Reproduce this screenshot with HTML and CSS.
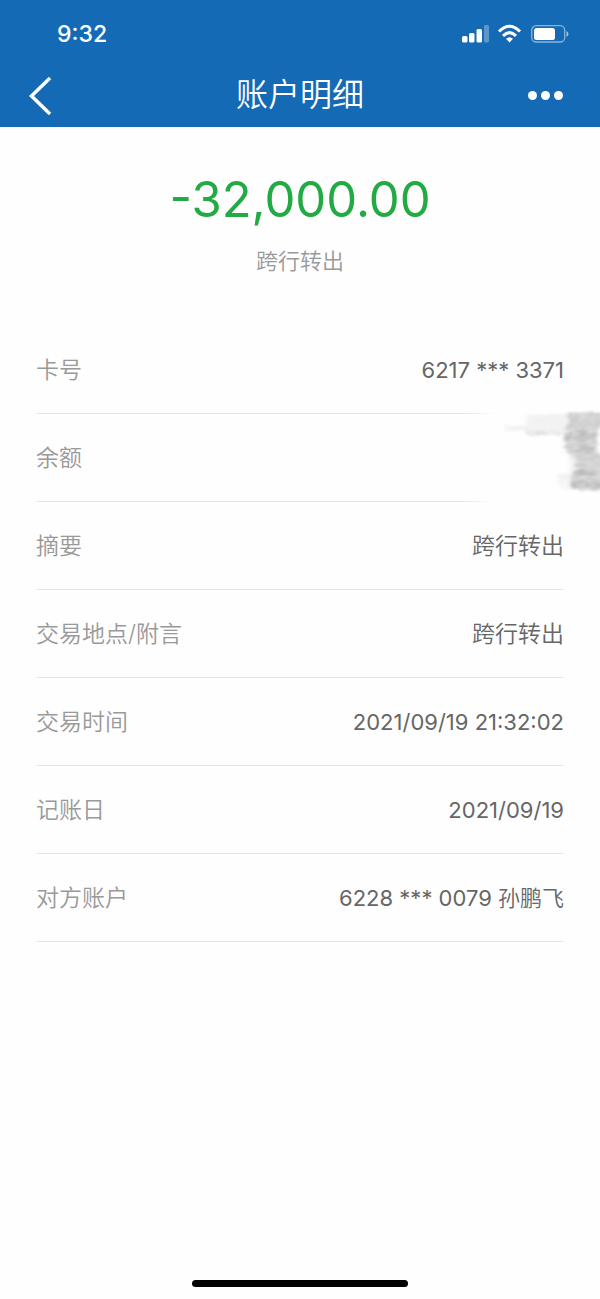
FILE: index.html
```
<!DOCTYPE html>
<html lang="zh-CN">
<head>
    <meta charset="UTF-8">
    <meta name="viewport" content="width=device-width, initial-scale=1.0">
    <title>账户明细</title>
    <link rel="stylesheet" href="styles.css">
</head>
<body>
    <header class="header">
        <div class="status-bar">
            <span class="time">9:32</span>
            <svg class="status-icons" width="108" height="20" viewBox="0 0 108 20" fill="#fff">
                <rect x="1" y="12" width="5.500" height="6.500" rx="1.500"/>
                <rect x="8" y="9" width="5.500" height="9.500" rx="1.500"/>
                <rect x="15.500" y="5" width="5.500" height="13.500" rx="1.500"/>
                <rect x="23" y="1" width="5" height="17.500" rx="1.500" opacity=".3"/>
                <g fill="none" stroke="#fff" stroke-width="3">
                    <path d="M38 7.500Q48.500 -3 59 7.500"/>
                    <path d="M42 11.800Q48.500 5.500 55 11.800"/>
                </g>
                <path d="M45 14.800Q48.500 11.500 52 14.800L48.500 18.500Z"/>
                <rect x="70.700" y="1.700" width="33" height="16.300" rx="4.500" fill="none" stroke="#fff" stroke-width="1.300" opacity=".5"/>
                <rect x="73" y="4" width="21" height="12" rx="2.500"/>
                <path d="M105.500 7Q107.500 8 107.500 10T105.500 13Z" opacity=".6"/>
            </svg>
        </div>
        <div class="nav-bar">
            <button type="button" class="nav-button" aria-label="返回">
                <svg width="24" height="40" viewBox="0 0 24 40" fill="none" stroke="#fff" stroke-width="3.500">
                    <path d="M22 3L3.500 21L22 39"/>
                </svg>
            </button>
            <h1>账户明细</h1>
            <button type="button" class="nav-button more" aria-label="更多">
                <svg width="36" height="10" viewBox="0 0 36 10" fill="#fff">
                    <circle cx="4.500" cy="5.500" r="4.500"/>
                    <circle cx="17.500" cy="5.500" r="4.500"/>
                    <circle cx="30.500" cy="5.500" r="4.500"/>
                </svg>
            </button>
        </div>
    </header>

    <main class="content">
        <div class="amount">-32,000.00</div>
        <div class="amount-type">跨行转出</div>

        <dl class="details">
            <div class="row">
                <dt>卡号</dt>
                <dd>6217 *** 3371</dd>
            </div>
            <div class="row">
                <dt>余额</dt>
                <dd>
                    <!-- balance is brushed out -->
                    <svg class="smudge" width="180" height="130" viewBox="0 0 180 130">
                        <defs>
                            <filter id="soft" x="-20%" y="-50%" width="140%" height="200%">
                                <feGaussianBlur stdDeviation="10 1"/>
                            </filter>
                            <filter id="edge" x="-20%" y="-20%" width="140%" height="140%">
                                <feGaussianBlur stdDeviation="3 1"/>
                            </filter>
                            <filter id="brush" x="-10%" y="-10%" width="120%" height="120%">
                                <feTurbulence type="fractalNoise" baseFrequency="0.120 0.350" numOctaves="3" seed="4" result="noise"/>
                                <feDisplacementMap in="SourceGraphic" in2="noise" scale="8" xChannelSelector="R" yChannelSelector="G" result="rough"/>
                                <feColorMatrix in="noise" type="matrix" values="0 0 0 0 0  0 0 0 0 0  0 0 0 0 0  1.500 0 0 0 0" result="grain"/>
                                <feComposite in="rough" in2="grain" operator="in"/>
                                <feGaussianBlur stdDeviation="1.500 0.800"/>
                            </filter>
                        </defs>
                        <rect x="58" y="107" width="140" height="10" fill="#fefefe" filter="url(#soft)"/>
                        <rect x="60" y="20" width="130" height="7" fill="#fefefe" filter="url(#soft)"/>
                        <g filter="url(#edge)">
                            <path d="M106 24H148V44H108V40H88V36H106Z" fill="#f8f8f8"/>
                            <path d="M147 22H176L186 27V34L176 40V58L186 70V98L176 101L152 99V68L146 60Z" fill="#e8e8e8"/>
                        </g>
                        <g filter="url(#brush)">
                            <path d="M108 25H148V45H106V40H84V36H107Z" fill="#f0f0f0"/>
                            <path d="M107 42H146V45H107Z" fill="#dedede"/>
                            <path d="M138 83H154V99H140Z" fill="#f0f0f0"/>
                            <path d="M148 23H174L186 26V35L178 38V58L174 63L186 68V99L176 101L164 99H151V82L156 80V70L154 67L146 60L145 43L148 37Z" fill="#ccc"/>
                            <path d="M148 42H176V50H148ZM158 56H174V64H158ZM154 80H176V86H154ZM153 91H184V99H153Z" fill="#bababa"/>
                        </g>
                    </svg>
                </dd>
            </div>
            <div class="row">
                <dt>摘要</dt>
                <dd class="text">跨行转出</dd>
            </div>
            <div class="row">
                <dt>交易地点/附言</dt>
                <dd class="text">跨行转出</dd>
            </div>
            <div class="row">
                <dt>交易时间</dt>
                <dd>2021/09/19 21:32:02</dd>
            </div>
            <div class="row">
                <dt>记账日</dt>
                <dd>2021/09/19</dd>
            </div>
            <div class="row">
                <dt>对方账户</dt>
                <dd>6228 *** 0079 <span class="name">孙鹏飞</span></dd>
            </div>
        </dl>
    </main>

    <footer class="home-indicator">
        <div class="home-bar"></div>
    </footer>
</body>
</html>
```
FILE: styles.css
```
* {
    box-sizing: border-box;
}

body {
    margin: 0;
    min-height: 100vh;
    display: flex;
    flex-direction: column;
    background-color: #fefefe;
    font-family: Inter, "Noto Sans CJK SC", sans-serif;
    color: #666;
    overflow-x: hidden;
}

.header {
    background-color: #156ab5;
    color: white;
}

.status-bar {
    display: flex;
    justify-content: space-between;
    align-items: center;
    height: 63px;
    padding: 4px 31px 0 57px;
}

.time {
    font-size: 23px;
    font-weight: 500;
    line-height: 28px;
}

.nav-bar {
    display: flex;
    justify-content: space-between;
    align-items: center;
    height: 64px;
    padding: 0 36px 0 28px;
}

.nav-bar h1 {
    margin: 0;
    font-size: 32px;
    font-weight: 350;
    line-height: 60px;
}

.nav-button {
    display: flex;
    align-items: center;
    width: 44px;
    height: 64px;
    padding: 0;
    border: none;
    background: none;
    cursor: pointer;
}

/* left button is wider so the title sits in the middle */
.nav-button:first-child {
    width: 52px;
}

.nav-button.more {
    justify-content: flex-end;
}

.content {
    flex: 1;
    padding: 40px 36px 0;
}

.amount {
    color: #22aa44;
    font-size: 49px;
    line-height: 66px;
    text-align: center;
}

.amount-type {
    margin-top: 12px;
    color: #999;
    font-size: 22px;
    font-weight: 350;
    line-height: 32px;
    text-align: center;
}

.details {
    margin: 49px 0 0;
}

.row {
    position: relative;
    display: flex;
    justify-content: space-between;
    align-items: center;
    height: 88px;
    border-bottom: 1px solid #e6e6e6;
    font-size: 22px;
    line-height: 32px;
}

.row dt {
    color: #999;
    font-size: 23px;
    font-weight: 350;
}

.row dd {
    margin: 0;
}

.row .text {
    font-size: 23px;
    font-weight: 350;
}

.row .name {
    font-weight: 350;
}

.smudge {
    position: absolute;
    top: -24px;
    right: -36px;
}

.home-indicator {
    display: flex;
    justify-content: center;
    padding-bottom: 12px;
}

.home-bar {
    width: 36%;
    height: 7px;
    border-radius: 4px;
    background-color: black;
}
```
